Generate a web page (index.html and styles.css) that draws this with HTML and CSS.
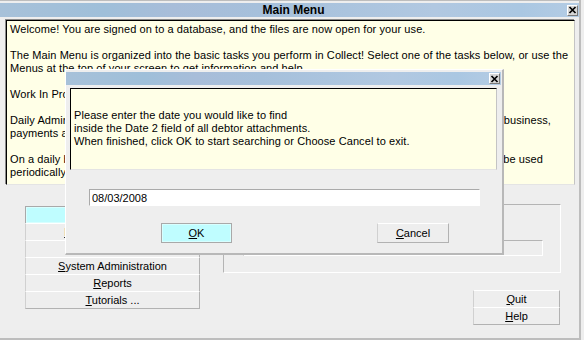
FILE: index.html
```html
<!DOCTYPE html>
<html lang="en">
<head>
    <meta charset="UTF-8">
    <meta name="viewport" content="width=device-width, initial-scale=1.0">
    <title>Main Menu</title>
    <link rel="stylesheet" href="styles.css">
</head>
<body>
    <div class="window">
        <div class="titlebar">
            <span></span>
            <span class="title">Main Menu</span>
            <span class="close">
                <svg width="9" height="8" viewBox="0 0 9 8"><path d="M1.5 1 L7.5 7 M7.5 1 L1.5 7" stroke="#000" stroke-width="1.7" fill="none"/></svg>
            </span>
        </div>
        <div class="memo">
            <p>Welcome! You are signed on to a database, and the files are now open for your use.</p>
            <p>&nbsp;</p>
            <p>The Main Menu is organized into the basic tasks you perform in Collect! Select one of the tasks below, or use the</p>
            <p>Menus at the top of your screen to get information and help.</p>
            <p>&nbsp;</p>
            <p>Work In Progress shows your scheduled accounts.</p>
            <p>&nbsp;</p>
            <p class="fit fit-business"><span>Daily Administration covers the routine tasks of your</span><span>business,</span></p>
            <p>payments and other transactions.</p>
            <p>&nbsp;</p>
            <p class="fit fit-used"><span>On a daily basis, other menus hold tasks that may</span><span>be used</span></p>
            <p>periodically.</p>
        </div>
        <div class="lower">
            <div class="tasks">
                <button class="task task-active"><u>W</u>ork In Progress</button>
                <button class="task"><u>D</u>aily Administration</button>
                <button class="task"><u>B</u>atch Processing</button>
                <button class="task"><u>S</u>ystem Administration</button>
                <button class="task"><u>R</u>eports</button>
                <button class="task"><u>T</u>utorials ...</button>
            </div>
            <div class="side">
                <div class="group">
                    <div class="group-field"></div>
                </div>
                <div class="side-buttons">
                    <button class="task"><u>Q</u>uit</button>
                    <button class="task"><u>H</u>elp</button>
                </div>
            </div>
        </div>
    </div>

    <div class="dialog">
        <div class="titlebar dialog-titlebar">
            <span></span>
            <span class="title"></span>
            <span class="close">
                <svg width="9" height="8" viewBox="0 0 9 8"><path d="M1.5 1 L7.5 7 M7.5 1 L1.5 7" stroke="#000" stroke-width="1.7" fill="none"/></svg>
            </span>
        </div>
        <div class="memo dialog-memo">
            <p>Please enter the date you would like to find</p>
            <p>inside the Date 2 field of all debtor attachments.</p>
            <p>When finished, click OK to start searching or Choose Cancel to exit.</p>
        </div>
        <input class="date-input" type="text" value="08/03/2008">
        <div class="dialog-buttons">
            <button class="task task-active btn-ok"><u>O</u>K</button>
            <button class="task btn-cancel"><u>C</u>ancel</button>
        </div>
    </div>
</body>
</html>
```
FILE: styles.css
```css
body {
  margin: 0;
  background: #eeeeee;
  font-family: "Liberation Sans", Arial, sans-serif;
  font-size: 11px;
  color: #000;
}
p {
  margin: 0;
}
.window {
  width: 581px;
  height: 340px;
  box-sizing: border-box;
  border-top: 1px solid #bdbdbd;
  border-right: 2px solid #bdbdbd;
  border-bottom: 2px solid #bdbdbd;
  padding-top: 2px;
  background: #eeeeee;
}
.titlebar {
  display: grid;
  grid-template-columns: 1fr auto 1fr;
  align-items: center;
  height: 14px;
  background: linear-gradient(90deg, #a7c1d9 0%, #9fbfd9 18%, #a8bdd9 30%, #a6c0db 45%, #abc4de 60%, #b1c8e1 75%, #aac7e2 90%, #b4cce4 100%);
}
.title {
  font-weight: bold;
  font-size: 12px;
  padding-left: 8px;
}
.close {
  justify-self: end;
  margin-right: 1px;
  width: 9px;
  height: 9px;
  display: flex;
  align-items: center;
  justify-content: center;
  border: 1px solid;
  border-color: #fff #7a7a7a #7a7a7a #fff;
  background: #d6d6d6;
}
.memo {
  margin: 3px 0 0 6px;
  width: 569px;
  height: 165px;
  box-sizing: border-box;
  border: 1px solid;
  border-color: #000 #c4c4c4 #e4e4e4 #000;
  box-shadow: -1px -1px 0 #8a8a8a;
  background: #ffffe7;
  padding: 2px 0 0 3px;
  line-height: 13px;
  letter-spacing: 0.08px;
}
.fit {
  display: flex;
  justify-content: space-between;
}
.fit-business {
  width: 541px;
}
.fit-used {
  width: 533px;
}
.lower {
  display: flex;
}
.tasks {
  display: flex;
  flex-direction: column;
  width: 175px;
  margin: 21px 0 0 25px;
}
.task {
  height: 18px;
  margin: -1px 0 0 0;
  padding: 0;
  box-sizing: border-box;
  border: 1px solid;
  border-color: #fff #b2b2b2 #b2b2b2 #d0d0d0;
  background: #eeeeee;
  font-family: "Liberation Sans", Arial, sans-serif;
  font-size: 11px;
  color: #000;
  text-align: center;
}
.tasks .task:first-child {
  margin-top: 0;
}
.task-active {
  background: #bffdff;
  border-color: #a9a9a9;
  box-shadow: inset 0 0 0 1px #d8ffff;
}
.side {
  display: flex;
  flex-direction: column;
  width: 338px;
  margin: 19px 0 0 23px;
}
.group {
  height: 69px;
  box-sizing: border-box;
  border: 1px solid;
  border-color: #b4b4b4 #fff #fff #b4b4b4;
  display: flex;
  justify-content: flex-end;
  padding: 35px 17px 0 0;
}
.group-field {
  width: 300px;
  height: 16px;
  box-sizing: border-box;
  border: 1px solid;
  border-color: #b4b4b4 #fff #fff #b4b4b4;
}
.side-buttons {
  display: flex;
  flex-direction: column;
  align-self: flex-end;
  width: 87px;
  margin: 17px 1px 0 0;
}
.side-buttons .task:first-child {
  margin-top: 0;
}
.dialog {
  position: absolute;
  left: 65px;
  top: 69px;
  width: 439px;
  height: 186px;
  box-sizing: border-box;
  border-left: 1px solid #fff;
  border-top: 1px solid #fff;
  border-right: 2px solid #b8b8b8;
  border-bottom: 2px solid #b8b8b8;
  padding-top: 2px;
  background: #eeeeee;
  display: flex;
  flex-direction: column;
}
.dialog-titlebar {
  height: 13px;
  margin-right: 1px;
}
.dialog-memo {
  margin: 3px 0 0 4px;
  width: 427px;
  height: 82px;
  padding: 20px 0 0 3px;
  box-shadow: none;
}
.date-input {
  margin: 19px 0 0 23px;
  width: 391px;
  height: 17px;
  box-sizing: border-box;
  border: 1px solid;
  border-color: #aaaaaa #fff #fff #aaaaaa;
  padding: 0 2px;
  background: #fff;
  font-family: "Liberation Sans", Arial, sans-serif;
  font-size: 11px;
  outline: none;
}
.dialog-buttons {
  display: flex;
  gap: 145px;
  margin: 17px 0 0 95px;
}
.dialog-buttons .task {
  margin: 0;
  height: 20px;
}
.btn-ok {
  width: 71px;
}
.btn-cancel {
  width: 72px;
}
```
